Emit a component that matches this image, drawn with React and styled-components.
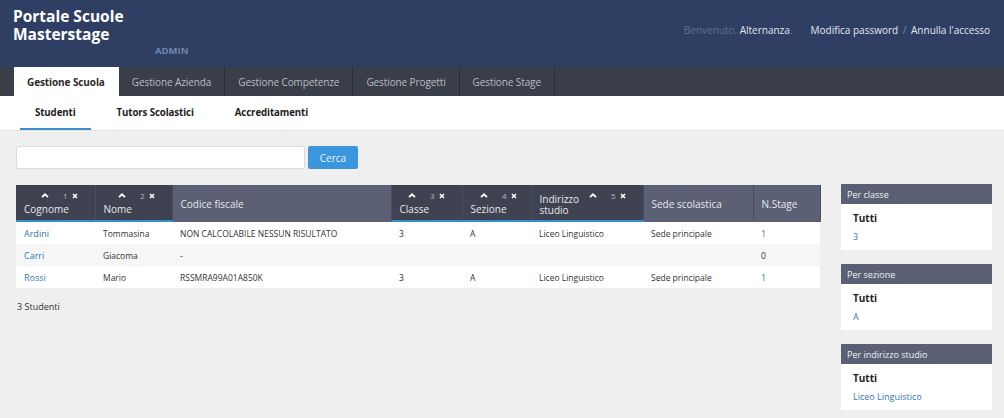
import React from "react";
import styled, { createGlobalStyle } from "styled-components";

const GlobalStyle = createGlobalStyle`
  body {
    margin: 0;
    background: #efefef;
    font-family: "Open Sans", "Noto Sans", sans-serif;
    color: #333;
  }
`;

const columns = [
  { key: "cognome", label: "Cognome", width: 79, sort: 1, link: true },
  { key: "nome", label: "Nome", width: 77, sort: 2 },
  { key: "cf", label: "Codice fiscale", width: 219 },
  { key: "classe", label: "Classe", width: 71, sort: 3 },
  { key: "sezione", label: "Sezione", width: 69, sort: 4, right: 14 },
  { key: "indirizzo", label: "Indirizzo studio", width: 112, sort: 5, twoLines: true },
  { key: "sede", label: "Sede scolastica", width: 110 },
  { key: "stage", label: "N.Stage", width: 67, link: true }
];

const rows = [
  { cognome: "Ardini", nome: "Tommasina", cf: "NON CALCOLABILE NESSUN RISULTATO", classe: "3", sezione: "A", indirizzo: "Liceo Linguistico", sede: "Sede principale", stage: "1" },
  { cognome: "Carri", nome: "Giacoma", cf: "-", classe: "", sezione: "", indirizzo: "", sede: "", stage: "0", stageDark: true },
  { cognome: "Rossi", nome: "Mario", cf: "RSSMRA99A01A850K", classe: "3", sezione: "A", indirizzo: "Liceo Linguistico", sede: "Sede principale", stage: "1" }
];

const filters = [
  { title: "Per classe", value: "3" },
  { title: "Per sezione", value: "A" },
  { title: "Per indirizzo studio", value: "Liceo Linguistico" }
];

const Chevron = () => (
  <svg width="8" height="5" viewBox="0 0 8 5">
    <path d="M1 4.2 L4 1.3 L7 4.2" fill="none" stroke="#fff" strokeWidth="1.8" />
  </svg>
);

const Times = () => (
  <svg width="6" height="6" viewBox="0 0 6 6">
    <path d="M1 1 L5 5 M5 1 L1 5" fill="none" stroke="#fff" strokeWidth="1.6" />
  </svg>
);

export default function App() {
  return (
    <>
      <GlobalStyle />
      <Header>
        <Brand>
          <Title>Portale Scuole<br />Masterstage</Title>
          <Role>ADMIN</Role>
        </Brand>
        <UserBox>
          <Welcome>Benvenuto, <strong>Alternanza</strong>.</Welcome>
          <UserLinks>
            Modifica password <Slash>/</Slash> Annulla l'accesso
          </UserLinks>
        </UserBox>
      </Header>
      <MainNav>
        <MainTab active>Gestione Scuola</MainTab>
        <MainTab>Gestione Azienda</MainTab>
        <MainTab>Gestione Competenze</MainTab>
        <MainTab>Gestione Progetti</MainTab>
        <MainTab>Gestione Stage</MainTab>
      </MainNav>
      <SubNav>
        <SubTab active>Studenti</SubTab>
        <SubTab>Tutors Scolastici</SubTab>
        <SubTab>Accreditamenti</SubTab>
      </SubNav>
      <Body>
        <MainCol>
          <SearchRow>
            <SearchInput />
            <SearchButton>Cerca</SearchButton>
          </SearchRow>
          <Table>
            <thead>
              <tr>
                {columns.map((c) => (
                  <Th key={c.key} sorted={!!c.sort} style={{ width: c.width }}>
                    {c.sort && (
                      <SortBadge right={c.right || 17}>
                        <Chevron />
                        <SortNum>{c.sort}</SortNum>
                        <Times />
                      </SortBadge>
                    )}
                    <HeadLabel sorted={!!c.sort} twoLines={c.twoLines}>
                      {c.twoLines ? (
                        <>Indirizzo<br />studio</>
                      ) : (
                        c.label
                      )}
                    </HeadLabel>
                  </Th>
                ))}
              </tr>
            </thead>
            <tbody>
              {rows.map((r, i) => (
                <Tr key={i} odd={i % 2 === 1}>
                  {columns.map((c) => (
                    <Td key={c.key}>
                      {c.link && !(c.key === "stage" && r.stageDark) ? (
                        <Link>{r[c.key]}</Link>
                      ) : (
                        r[c.key]
                      )}
                    </Td>
                  ))}
                </Tr>
              ))}
            </tbody>
          </Table>
          <Count>3 Studenti</Count>
        </MainCol>
        <Sidebar>
          {filters.map((f) => (
            <Panel key={f.title}>
              <PanelHead>{f.title}</PanelHead>
              <PanelBody>
                <All>Tutti</All>
                <Link>{f.value}</Link>
              </PanelBody>
            </Panel>
          ))}
        </Sidebar>
      </Body>
    </>
  );
}

const Header = styled.header`
  height: 67px;
  background: #2f3f63;
  display: flex;
  justify-content: space-between;
  padding: 0 14px 0 13px;
  box-sizing: border-box;
`;

const Brand = styled.div`
  padding-top: 7px;
`;

const Title = styled.div`
  color: #fff;
  font-weight: 700;
  font-size: 15.5px;
  line-height: 18px;
`;

const Role = styled.div`
  color: #6f86b0;
  font-weight: 700;
  font-size: 9.5px;
  margin: 1px 0 0 142px;
`;

const UserBox = styled.div`
  display: flex;
  align-items: center;
  gap: 18px;
  font-size: 10px;
  padding-bottom: 8px;
`;

const Welcome = styled.span`
  color: #5f6f92;
  strong {
    color: #dfe5f0;
    font-weight: 400;
  }
`;

const UserLinks = styled.span`
  color: #e3e8f2;
`;

const Slash = styled.span`
  color: #7d8aa6;
  margin: 0 2px;
`;

const MainNav = styled.nav`
  height: 29px;
  background: #3a3e48;
  display: flex;
  padding-left: 14px;
`;

const MainTab = styled.div`
  display: flex;
  align-items: center;
  padding: 0 13px;
  font-size: 10px;
  border-right: 1px solid ${(p) => (p.active ? "transparent" : "#2c2f36")};
  background: ${(p) => (p.active ? "#fff" : "transparent")};
  color: ${(p) => (p.active ? "#2b2b2b" : "#b8bcc4")};
  font-weight: ${(p) => (p.active ? 700 : 400)};
  letter-spacing: -0.1px;
`;

const SubNav = styled.nav`
  height: 35px;
  background: #fff;
  display: flex;
  padding-left: 20px;
  border-bottom: 1px solid #e2e2e2;
  box-sizing: border-box;
`;

const SubTab = styled.div`
  display: flex;
  align-items: center;
  padding: 0 15px 2px 15px;
  margin-right: 11px;
  font-size: 9.7px;
  font-weight: 700;
  letter-spacing: -0.1px;
  color: #222;
  box-shadow: ${(p) => (p.active ? "inset 0 -2px 0 #3d8fc9" : "none")};
`;

const Body = styled.div`
  display: flex;
  padding: 15px 12px 0 16px;
  gap: 21px;
`;

const MainCol = styled.div`
  width: 804px;
`;

const SearchRow = styled.div`
  display: flex;
  gap: 3px;
  margin-bottom: 16px;
`;

const SearchInput = styled.div`
  width: 287px;
  height: 21px;
  background: #fff;
  border: 1px solid #dcdcdc;
  border-radius: 2px;
`;

const SearchButton = styled.div`
  width: 50px;
  height: 23px;
  background: #3c96dd;
  color: #eaf4fc;
  font-size: 10px;
  border-radius: 2px;
  display: flex;
  align-items: center;
  justify-content: center;
`;

const Table = styled.table`
  width: 804px;
  border-collapse: collapse;
  table-layout: fixed;
  font-size: 8.5px;
`;

const Th = styled.th`
  position: relative;
  height: 36px;
  padding: 0 8px;
  text-align: left;
  vertical-align: bottom;
  font-weight: 400;
  color: #e6e8ee;
  background: ${(p) => (p.sorted ? "#3e4251" : "#5b6074")};
  border-right: 1px solid #4a4e5c;
  border-bottom: 2px solid ${(p) => (p.sorted ? "#2f8fd0" : "#5b6074")};
  box-sizing: border-box;
`;

const HeadLabel = styled.div`
  font-size: 10px;
  line-height: ${(p) => (p.twoLines ? "11px" : "12px")};
  padding-bottom: ${(p) => (p.twoLines ? "4px" : p.sorted ? "5px" : "10px")};
`;

const SortBadge = styled.div`
  position: absolute;
  top: 6px;
  right: ${(p) => p.right}px;
  display: flex;
  align-items: center;
  font-size: 8px;
  line-height: 9px;
  color: #b9bdc8;
`;

const SortNum = styled.span`
  margin: 0 4px 0 14px;
`;

const Tr = styled.tr`
  background: ${(p) => (p.odd ? "#f6f6f6" : "#fff")};
`;

const Td = styled.td`
  height: 22px;
  padding: 0 8px;
  color: #333;
  white-space: nowrap;
  overflow: hidden;
`;

const Link = styled.span`
  color: #3276b1;
  font-size: 9px;
`;

const Count = styled.div`
  margin-top: 12px;
  font-size: 9px;
  color: #333;
  padding-left: 1px;
`;

const Sidebar = styled.aside`
  width: 151px;
  padding-top: 38px;
  display: flex;
  flex-direction: column;
  gap: 14px;
`;

const Panel = styled.div`
  background: #fff;
`;

const PanelHead = styled.div`
  height: 20px;
  background: #5b6074;
  color: #eef0f4;
  font-size: 9px;
  display: flex;
  align-items: center;
  padding-left: 6px;
`;

const PanelBody = styled.div`
  padding: 7px 12px 7px;
  display: flex;
  flex-direction: column;
  gap: 5px;
`;

const All = styled.div`
  font-size: 10px;
  font-weight: 700;
  color: #222;
`;
